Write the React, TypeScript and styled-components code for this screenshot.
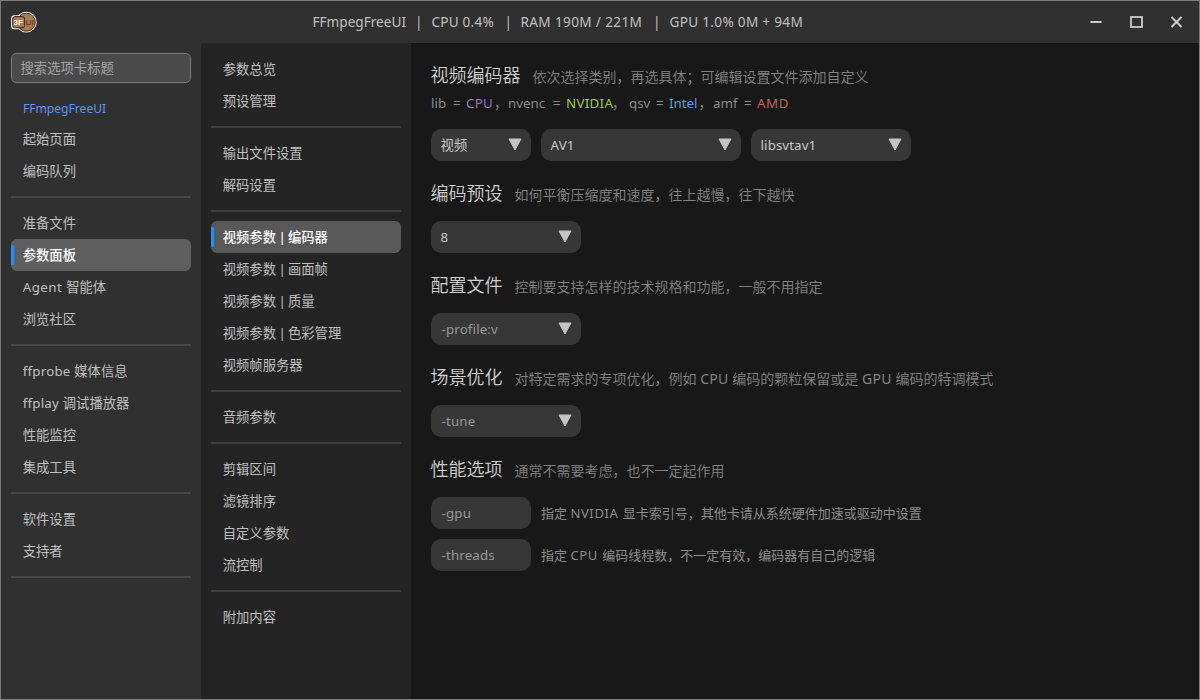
import React from 'react';
import styled, { createGlobalStyle } from 'styled-components';

const GlobalStyle = createGlobalStyle`
  * { box-sizing: border-box; }
  body {
    margin: 0;
    background: #181818;
    font-family: 'Noto Sans', 'Noto Sans CJK SC', sans-serif;
    font-size: 13.33px;
    color: #c0c0c0;
  }
`;

const Window = styled.div`
  width: 1200px;
  height: 700px;
  border: 1px solid #7b7c7b;
  display: flex;
  flex-direction: column;
  background: #181818;
  overflow: hidden;
`;

const TitleBar = styled.header`
  height: 42px;
  flex: none;
  display: grid;
  grid-template-columns: 1fr auto 1fr;
  align-items: center;
  padding: 0 12px 0 9px;
  background: #303030;
`;

const Logo = styled.svg`
  display: block;
  width: 28px;
  height: 26px;
`;

const Status = styled.div`
  display: flex;
  font-size: 13.6px;
  line-height: 20px;
  white-space: pre;
  transform: translateX(-40px);
`;

const Run = styled.span<{ $w?: number; $color?: string; $track?: number }>`
  display: inline-block;
  white-space: pre;
  width: ${p => (p.$w ? `${p.$w}px` : 'auto')};
  color: ${p => p.$color ?? 'inherit'};
  letter-spacing: ${p => p.$track ?? 0}px;
`;

const Comma = styled(Run)`
  text-indent: -1px;
`;

const Latin = styled.span<{ $track: number }>`
  font-weight: 400;
  letter-spacing: ${p => p.$track}px;
`;

const Pipe = styled.span`
  display: inline-block;
  width: 5px;
  text-indent: -1px;
`;

const WindowButtons = styled.div`
  display: flex;
  justify-content: flex-end;
  gap: 18px;
  svg { display: block; width: 22px; height: 22px; }
`;

const Body = styled.div`
  flex: 1;
  display: flex;
  min-height: 0;
`;

const SideColumn = styled.nav<{ $w: number; $bg: string }>`
  width: ${p => p.$w}px;
  flex: none;
  padding: 10px;
  background: ${p => p.$bg};
`;

const Search = styled.div`
  height: 30px;
  border: 1px solid #7a7a7a;
  border-radius: 5px;
  background: #4a4a4a;
  color: #a6a6a6;
  padding: 0 8.5px;
  line-height: 28px;
`;

const Caption = styled.div`
  height: 40px;
  padding: 10px 12px 0;
  font-size: 12.1px;
  line-height: 31px;
  color: #6495ed;
`;

const Item = styled.div<{ $active?: boolean; $bg?: string }>`
  position: relative;
  height: 32px;
  padding: 0 11.7px;
  line-height: 32px;
  white-space: pre;
  border-radius: 6px;
  overflow: hidden;
  color: ${p => (p.$active ? '#fff' : '#c0c0c0')};
  font-weight: ${p => (p.$active ? 500 : 400)};
  background: ${p => (p.$active ? p.$bg : 'transparent')};
  &::before {
    content: '';
    display: ${p => (p.$active ? 'block' : 'none')};
    position: absolute;
    left: 0;
    top: 6px;
    width: 3px;
    height: 20px;
    border-radius: 1px;
    background: #1e90ff;
  }
`;

const Divider = styled.div<{ $color: string }>`
  height: 2px;
  margin: 9px 0;
  background: ${p => p.$color};
`;

const Content = styled.main`
  flex: 1;
  padding: 17px 20px;
`;

const Heading = styled.div<{ $h: number; $pad?: number }>`
  height: ${p => p.$h}px;
  padding-top: ${p => p.$pad ?? 0}px;
  margin-left: -0.5px;
  display: flex;
  align-items: baseline;
  gap: 12px;
  line-height: 30px;
`;

const Title = styled.h2`
  margin: 0;
  font-size: 18px;
  font-weight: 350;
  color: #d0d0d0;
`;

const Hint = styled.div`
  font-size: 14px;
  font-weight: 350;
  color: #838383;
  white-space: pre;
`;

const Legend = styled.div`
  height: 42px;
  padding-top: 3px;
  display: flex;
  font-size: 13.33px;
  line-height: 26px;
  color: #8a8a8a;
`;

const Fields = styled.div`
  display: flex;
  align-items: center;
  gap: 10px;
  & + & { margin-top: 10px; }
`;

const Field = styled.div<{ $w: number; $dim?: boolean }>`
  width: ${p => p.$w}px;
  height: 32px;
  padding: 0 9px 0 ${p => (p.$dim ? 10.6 : 9.6)}px;
  display: flex;
  align-items: center;
  justify-content: space-between;
  line-height: 20px;
  letter-spacing: ${p => (p.$dim ? 0.12 : 0.08)}px;
  border-radius: 10px;
  background: #373737;
  color: ${p => (p.$dim ? '#999' : '#c8c8c8')};
  svg { display: block; width: 14px; height: 14px; }
`;

const Note = styled.div`
  font-size: 13px;
  line-height: 20px;
  padding-bottom: 1px;
  color: #8c8c8c;
  white-space: pre;
`;

type Entry = string | null | { label: string; active?: boolean };

const mainMenu: Entry[] = [
  '起始页面', '编码队列', null,
  '准备文件', { label: '参数面板', active: true }, 'Agent 智能体', '浏览社区', null,
  'ffprobe 媒体信息', 'ffplay 调试播放器', '性能监控', '集成工具', null,
  '软件设置', '支持者', null,
];

const panelMenu: Entry[] = [
  '参数总览', '预设管理', null,
  '输出文件设置', '解码设置', null,
  { label: '视频参数 | 编码器', active: true }, '视频参数 | 画面帧', '视频参数 | 质量', '视频参数 | 色彩管理', '视频帧服务器', null,
  '音频参数', null,
  '剪辑区间', '滤镜排序', '自定义参数', '流控制', null,
  '附加内容',
];

/* Tracks Latin words slightly wider than the CJK text around them. */
function Mixed({ text, track }: { text: string; track: number }) {
  return (
    <>
      {text.split(/([A-Za-z]+ ?|\|)/).map((part, i) => {
        if (part === '|') return <Pipe key={i}>|</Pipe>;
        if (/[A-Za-z]/.test(part)) return <Latin key={i} $track={track}>{part}</Latin>;
        return part;
      })}
    </>
  );
}

function Menu({ entries, activeBg, line }: { entries: Entry[]; activeBg: string; line: string }) {
  return (
    <>
      {entries.map((e, i) => {
        if (e === null) return <Divider key={i} $color={line} />;
        const entry = typeof e === 'string' ? { label: e, active: false } : e;
        return (
          <Item key={i} $active={entry.active} $bg={activeBg}>
            <Mixed text={entry.label} track={entry.label.startsWith('A') ? 0.45 : 0.22} />
          </Item>
        );
      })}
    </>
  );
}

const Arrow = () => (
  <svg viewBox="0 0 14 14">
    <path d="M1 1H13L7 12Z" fill="#c4c4c4" stroke="#c4c4c4" strokeWidth="1" strokeLinejoin="round" />
  </svg>
);

function Select({ w, value, dim }: { w: number; value: string; dim?: boolean }) {
  return <Field $w={w} $dim={dim}><span>{value}</span><Arrow /></Field>;
}

export default function App() {
  return (
    <>
      <GlobalStyle />
      <Window>
        <TitleBar>
          <Logo viewBox="0 0 28 26">
            <circle cx="16.3" cy="13.2" r="10.4" fill="#fff" />
            <rect x="1.1" y="6.2" width="14.4" height="14" rx="3.4" fill="#fff" />
            <circle cx="16.3" cy="13.2" r="9" fill="#a87b50" stroke="#3f2414" strokeWidth="1" />
            <rect x="2.6" y="7.6" width="12" height="11.2" rx="2.4" fill="#a87b50" stroke="#3f2414" strokeWidth="1" />
            <text x="3.6" y="16.2" fontFamily="Liberation Sans" fontSize="8" fontWeight="700" fill="#f4f0ec">3F</text>
            <text x="15.8" y="16.2" fontFamily="Liberation Sans" fontSize="8" fill="#3f2414">UI</text>
          </Logo>
          <Status>
            <Run $w={102.5}>FFmpegFreeUI</Run>
            <Run $w={16.5}>|</Run>
            <Run $w={73} $track={0.2}>CPU 0.4%</Run>
            <Run $w={16}>|</Run>
            <Run $w={132.5} $track={0.35}>RAM 190M / 221M</Run>
            <Run $w={16.5}>|</Run>
            <Run $w={135} $track={0.3}>GPU 1.0% 0M + 94M</Run>
          </Status>
          <WindowButtons>
            <svg viewBox="0 0 22 22"><path d="M5.5 11H16.5" stroke="#ccc" strokeWidth="2" /></svg>
            <svg viewBox="0 0 22 22"><rect x="6" y="6" width="11" height="10" fill="none" stroke="#ccc" strokeWidth="1.8" /></svg>
            <svg viewBox="0 0 22 22"><path d="M6.5 6L16.5 16M16.5 6L6.5 16" stroke="#ccc" strokeWidth="2" /></svg>
          </WindowButtons>
        </TitleBar>
        <Body>
          <SideColumn $w={200} $bg="#303030">
            <Search>搜索选项卡标题</Search>
            <Caption>FFmpegFreeUI</Caption>
            <Menu entries={mainMenu} activeBg="#5f5f5f" line="#484848" />
          </SideColumn>
          <SideColumn $w={210} $bg="#242424">
            <Menu entries={panelMenu} activeBg="#585858" line="#3e3e3e" />
          </SideColumn>
          <Content>
            <Heading $h={27}>
              <Title>视频编码器</Title>
              <Hint>依次选择类别，再选具体；可编辑设置文件添加自定义</Hint>
            </Heading>
            <Legend>
              <Run $w={22}>lib</Run>
              <Run $w={13}>=</Run>
              <Run $w={29} $color="#9370db" $track={0.3}>CPU</Run>
              <Comma $w={13}>，</Comma>
              <Run $w={45}>nvenc</Run>
              <Run $w={13}>=</Run>
              <Run $w={47} $color="#9acd32" $track={0.3}>NVIDIA</Run>
              <Comma $w={16}>，</Comma>
              <Run $w={27}>qsv</Run>
              <Run $w={13}>=</Run>
              <Run $w={30.5} $color="#6495ed">Intel</Run>
              <Comma $w={13.5}>，</Comma>
              <Run $w={31}>amf</Run>
              <Run $w={13}>=</Run>
              <Run $color="#cd5c5c" $track={0.6}>AMD</Run>
            </Legend>
            <Fields>
              <Select w={100} value="视频" />
              <Select w={200} value="AV1" />
              <Select w={160} value="libsvtav1" />
            </Fields>
            <Heading $h={60} $pad={17}>
              <Title>编码预设</Title>
              <Hint>如何平衡压缩度和速度，往上越慢，往下越快</Hint>
            </Heading>
            <Fields><Select w={150} value="8" /></Fields>
            <Heading $h={60} $pad={17}>
              <Title>配置文件</Title>
              <Hint>控制要支持怎样的技术规格和功能，一般不用指定</Hint>
            </Heading>
            <Fields><Select w={150} value="-profile:v" dim /></Fields>
            <Heading $h={60} $pad={17}>
              <Title>场景优化</Title>
              <Hint><Mixed text="对特定需求的专项优化，例如 CPU 编码的颗粒保留或是 GPU 编码的特调模式" track={0.25} /></Hint>
            </Heading>
            <Fields><Select w={150} value="-tune" dim /></Fields>
            <Heading $h={60} $pad={17}>
              <Title>性能选项</Title>
              <Hint>通常不需要考虑，也不一定起作用</Hint>
            </Heading>
            <Fields>
              <Field $w={100} $dim>-gpu</Field>
              <Note><Mixed text="指定 NVIDIA 显卡索引号，其他卡请从系统硬件加速或驱动中设置" track={0.65} /></Note>
            </Fields>
            <Fields>
              <Field $w={100} $dim>-threads</Field>
              <Note><Mixed text="指定 CPU 编码线程数，不一定有效，编码器有自己的逻辑" track={0.7} /></Note>
            </Fields>
          </Content>
        </Body>
      </Window>
    </>
  );
}
